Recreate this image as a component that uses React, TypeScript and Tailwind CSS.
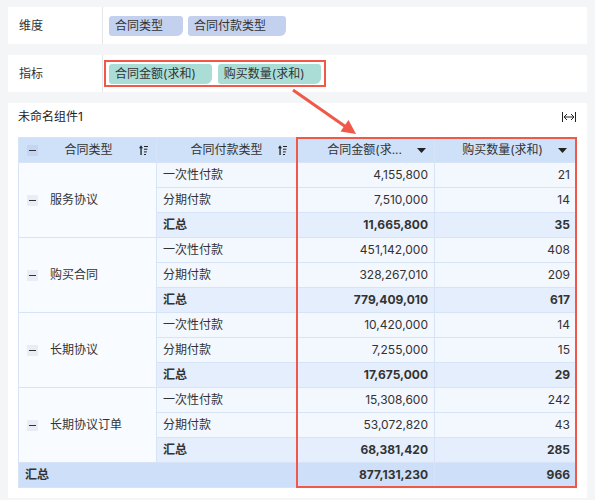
import React from "react";

type Row = [string, string, string];
type Group = { name: string; rows: Row[]; total: [string, string] };

const groups: Group[] = [
  {
    name: "服务协议",
    rows: [
      ["一次性付款", "4,155,800", "21"],
      ["分期付款", "7,510,000", "14"],
    ],
    total: ["11,665,800", "35"],
  },
  {
    name: "购买合同",
    rows: [
      ["一次性付款", "451,142,000", "408"],
      ["分期付款", "328,267,010", "209"],
    ],
    total: ["779,409,010", "617"],
  },
  {
    name: "长期协议",
    rows: [
      ["一次性付款", "10,420,000", "14"],
      ["分期付款", "7,255,000", "15"],
    ],
    total: ["17,675,000", "29"],
  },
  {
    name: "长期协议订单",
    rows: [
      ["一次性付款", "15,308,600", "242"],
      ["分期付款", "53,072,820", "43"],
    ],
    total: ["68,381,420", "285"],
  },
];

const SortIcon = () => (
  <svg width="9" height="10" viewBox="0 0 9 10" className="shrink-0">
    <polygon points="0,3.2 2,0.2 4,3.2" fill="#222" />
    <rect x="1.4" y="2.5" width="1.3" height="7.5" fill="#222" />
    <rect x="5" y="1" width="4" height="1" fill="#222" />
    <rect x="5" y="3.7" width="3.4" height="1" fill="#222" />
    <rect x="5" y="6.4" width="2.8" height="1" fill="#222" />
    <rect x="5" y="9" width="2" height="1" fill="#222" />
  </svg>
);

const Caret = () => (
  <svg width="9" height="5" viewBox="0 0 9 5" className="shrink-0">
    <polygon points="0,0 9,0 4.5,5" fill="#222" />
  </svg>
);

const Minus = ({ dark }: { dark?: boolean }) => (
  <span
    className={
      "flex h-[11px] w-[11px] shrink-0 items-center justify-center " +
      (dark ? "bg-[#c3d5f1]" : "bg-[#e9eef6]")
    }
  >
    <span className="h-px w-[7px] bg-[#333]" />
  </span>
);

const Pill = ({ text, teal }: { text: string; teal?: boolean }) => (
  <div
    className={
      "flex h-[20px] items-center rounded-[3px] rounded-br-[6px] pl-[6px] text-[12px] text-[#333] " +
      (teal ? "bg-[#a9ddd6] pr-[16px]" : "bg-[#c3d1ee] pr-[20px]")
    }
  >
    {text}
  </div>
);

export default function App() {
  return (
    <div
      className="relative h-[500px] w-[595px] overflow-hidden bg-[#f4f5f7] pt-[7px] text-[#333]"
      style={{ fontFamily: 'Inter, "Noto Sans CJK SC", sans-serif' }}
    >
      {/* 维度 */}
      <div className="mx-[8px] flex h-[37px] bg-white">
        <div className="flex w-[95px] items-center border-r border-[#e4e6ea] pl-[11px] text-[12px]">维度</div>
        <div className="flex items-center gap-[5px] pl-[6px]">
          <Pill text="合同类型" />
          <Pill text="合同付款类型" />
        </div>
      </div>

      {/* 指标 */}
      <div className="mx-[8px] mt-[11px] flex h-[37px] bg-white">
        <div className="flex w-[95px] items-center border-r border-[#e4e6ea] pl-[11px] text-[12px]">指标</div>
        <div className="flex items-center pl-[1px]">
          <div className="flex gap-[6px] border-2 border-[#f0584a] px-[3px] py-[1.5px]">
            <Pill text="合同金额(求和)" teal />
            <Pill text="购买数量(求和)" teal />
          </div>
        </div>
      </div>

      {/* 组件 */}
      <div className="mx-[8px] mt-[11px] bg-white px-[10px] pb-[10px] pt-[4px]">
        <div className="flex h-[20px] items-center justify-between">
          <span className="text-[12px] text-[#222]">未命名组件1</span>
          <svg width="14" height="10" viewBox="0 0 14 10" className="mr-[1px]">
            <g stroke="#222" strokeWidth="1" fill="none">
              <line x1="0.5" y1="0" x2="0.5" y2="10" />
              <line x1="13.5" y1="0" x2="13.5" y2="10" />
              <line x1="2" y1="5" x2="12" y2="5" />
              <polyline points="5,2 2,5 5,8" />
              <polyline points="9,2 12,5 9,8" />
            </g>
          </svg>
        </div>

        <div className="relative mt-[10px]">
          <div className="grid grid-cols-[137px_139px_137px_1fr] auto-rows-[24px] gap-px border border-[#d7e4f8] bg-[#d7e4f8] text-[12px] text-[#333]">
            {/* header */}
            <div className="flex items-center justify-between bg-[#cfe0f9] pl-[8px] pr-[8px]">
              <Minus dark />
              <span>合同类型</span>
              <SortIcon />
            </div>
            <div className="flex items-center bg-[#cfe0f9] pl-[9px] pr-[9px]">
              <span className="w-[9px]" />
              <span className="flex-1 text-center">合同付款类型</span>
              <SortIcon />
            </div>
            <div className="flex items-center justify-end gap-[15px] bg-[#cfe0f9] pr-[8px]">
              <span>合同金额(求...</span>
              <Caret />
            </div>
            <div className="flex items-center justify-end gap-[15px] bg-[#cfe0f9] pr-[9px]">
              <span>购买数量(求和)</span>
              <Caret />
            </div>

            {groups.map((g) => (
              <React.Fragment key={g.name}>
                <div className="row-span-3 flex items-center gap-[12px] bg-[#f8fbff] pl-[8px]">
                  <Minus />
                  <span>{g.name}</span>
                </div>
                {g.rows.map((r) => (
                  <React.Fragment key={r[0]}>
                    <div className="flex items-center bg-[#f3f7fe] pl-[6px]">{r[0]}</div>
                    <div className="flex items-center justify-end bg-[#f3f7fe] pr-[6px]">{r[1]}</div>
                    <div className="flex items-center justify-end bg-[#f3f7fe] pr-[6px]">{r[2]}</div>
                  </React.Fragment>
                ))}
                <div className="flex items-center bg-[#e5eefc] pl-[6px] font-bold">汇总</div>
                <div className="flex items-center justify-end bg-[#e5eefc] pr-[6px] font-bold">{g.total[0]}</div>
                <div className="flex items-center justify-end bg-[#e5eefc] pr-[6px] font-bold">{g.total[1]}</div>
              </React.Fragment>
            ))}

            <div className="col-span-2 flex items-center bg-[#cddff9] pl-[6px] font-bold">汇总</div>
            <div className="flex items-center justify-end bg-[#cddff9] pr-[6px] font-bold">877,131,230</div>
            <div className="flex items-center justify-end bg-[#cddff9] pr-[6px] font-bold">966</div>
          </div>
          {/* highlight round the measures */}
          <div className="pointer-events-none absolute bottom-0 left-[278px] right-0 top-0 border-2 border-[#f0584a]" />
        </div>
      </div>

      {/* arrow */}
      <svg className="pointer-events-none absolute left-0 top-0" width="595" height="500">
        <line x1="293" y1="90" x2="346" y2="127" stroke="#f0584a" strokeWidth="3" />
        <polygon points="356,134 340.5,131.5 348.5,120" fill="#f0584a" />
      </svg>
    </div>
  );
}
